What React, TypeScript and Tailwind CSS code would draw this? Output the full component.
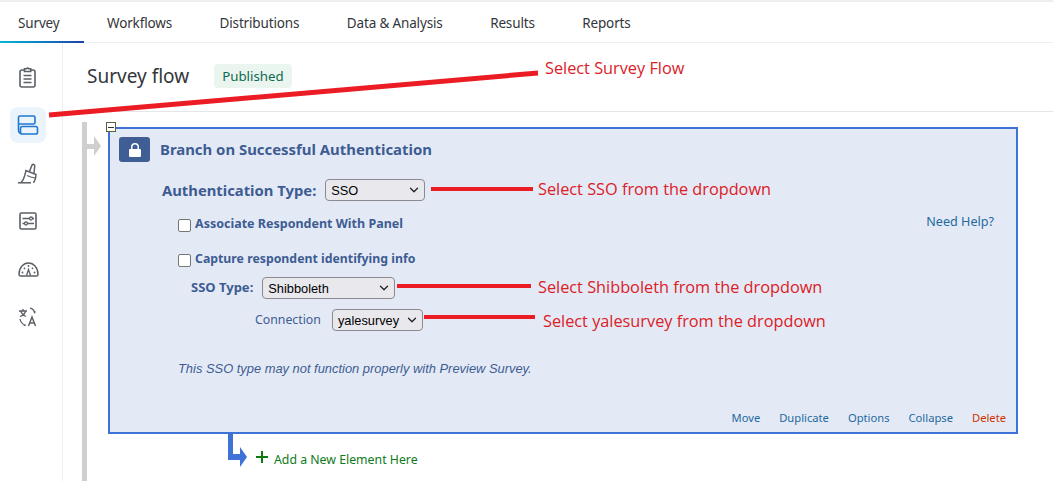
import { ChevronDown } from "lucide-react";

const TABS = ["Survey", "Workflows", "Distributions", "Data & Analysis", "Results", "Reports"];

function ClipboardIcon() {
  return (
    <svg width="20" height="22" viewBox="0 0 20 22" fill="none" strokeWidth="1.6" stroke="#5b5f66">
      <rect x="2" y="4" width="15" height="17" rx="2" />
      <path d="M6.500 4V2.800h2a1.200 1.200 0 0 1 2.200 0h2V5.500h-6.200z" fill="#fff" />
      <path d="M5.500 9.500h8M5.500 13h8M5.500 16.500h8" />
    </svg>
  );
}

function FlowIcon() {
  return (
    <svg width="22" height="22" viewBox="0 0 22 22" fill="none" stroke="#1f78d1" strokeWidth="1.600">
      <path d="M4 19.500C2.300 19 1.500 17.800 1.500 16V3.500A1.500 1.500 0 0 1 3 2H16.500A1.500 1.500 0 0 1 18 3.500V8.500A1.500 1.500 0 0 1 16.500 10H1.500" />
      <rect x="3.500" y="12.500" width="17" height="7.500" rx="1.800" />
    </svg>
  );
}

function BrushIcon() {
  return (
    <svg width="20" height="21" viewBox="0 0 20 21" fill="none" stroke="#5b5f66" strokeWidth="1.500">
      <path d="M0 19.800h13" />
      <path d="M3 19.500C6 17 7 12 8 7.500L18 11.500C18 14 17 17.500 15.500 19.800" />
      <path d="M11.500 8.500 13.800 2.500A1.500 1.500 0 0 1 16.700 3.300L16 10" />
      <path d="M9 12.500c2 1 5 2 8 2.500" strokeWidth="1.200" />
    </svg>
  );
}

function SlidersIcon() {
  return (
    <svg width="18" height="18" viewBox="0 0 18 18" fill="none" stroke="#5b5f66" strokeWidth="1.300">
      <rect x="1" y="1" width="16" height="16" rx="1.500" strokeWidth="1.600" />
      <path d="M3.500 6.500h7M13.500 6.500h1.500M3.500 11.500h2M8.500 11.500h6.500" />
      <circle cx="12" cy="6.500" r="1.500" />
      <circle cx="7" cy="11.500" r="1.500" />
    </svg>
  );
}

function GaugeIcon() {
  return (
    <svg width="21" height="15" viewBox="0 0 21 15" fill="none" stroke="#5b5f66" strokeWidth="1.500">
      <path d="M2.500 14A1.500 1.500 0 0 1 1 12.500C1 5.500 5.500 1 10.500 1S20 5.500 20 12.500A1.500 1.500 0 0 1 18.500 14z" />
      <path d="M8.500 13.500 10.500 7.500 12.500 13.500" strokeWidth="1.300" />
      <g fill="#5b5f66" stroke="none">
        <circle cx="4.500" cy="10.500" r="0.900" />
        <circle cx="6.500" cy="6.300" r="0.900" />
        <circle cx="10.500" cy="4" r="0.900" />
        <circle cx="14.500" cy="6.300" r="0.900" />
        <circle cx="16.500" cy="10.500" r="0.900" />
      </g>
    </svg>
  );
}

function TranslateIcon() {
  return (
    <svg width="20" height="20" viewBox="0 0 20 20" fill="none" stroke="#5b5f66" strokeWidth="1.300">
      <path d="M1 4h8M5 2v2M7.500 4c-.5 2.500-2.500 4.500-5.500 5.500M2.800 4.500c.8 2 2.500 4 5.200 5" />
      <path d="M12 1.200c2.500.5 4 2.200 4.500 4.300l1-1" />
      <path d="M2 12c.5 2.800 2.200 5 5 6l-1.200.6" />
      <path d="M10.500 19l3.500-9 3.500 9M11.800 16h4.500" strokeWidth="1.500" />
    </svg>
  );
}

function RailButton({ active, children }: { active?: boolean; children: React.ReactNode }) {
  return (
    <div
      className={`flex h-9 w-9 items-center justify-center rounded-lg ${
        active ? "bg-[#ebf3fb]" : ""
      }`}>
      {children}
    </div>
  );
}

function Dropdown({ value, className }: { value: string; className: string }) {
  return (
    <div
      className={`flex h-[22px] items-center justify-between rounded-[4px] border border-[#8a8a90] bg-[#e9e9ed] pl-[5px] pr-[3px] font-['Liberation_Sans',sans-serif] text-[12.800px] text-black ${className}`}>
      <span>{value}</span>
      <ChevronDown size={14} strokeWidth={2.200} className="text-[#222]" />
    </div>
  );
}

function Checkbox({ className }: { className: string }) {
  return <span className={`block h-[13px] w-[13px] shrink-0 rounded-[2px] border border-[#767676] bg-white ${className}`} />;
}

function Annotation({ className, children }: { className: string; children: React.ReactNode }) {
  return (
    <span className={`absolute font-['Open_Sans',sans-serif] text-[16.300px] leading-5 whitespace-nowrap text-[#dc2027] ${className}`}>
      {children}
    </span>
  );
}

export default function App() {
  return (
    <div className="relative h-[481px] w-[1053px] overflow-hidden bg-white font-['Noto_Sans',sans-serif]">
      {/* top tabs */}
      <div className="flex h-[43px] gap-[47.500px] border-b border-t-2 border-[#eceef0] pl-[18px] pt-[2px] text-[13.500px] tracking-[-0.15px] text-[#32363a]">
        {TABS.map((tab, i) => (
          <div key={tab} className="relative flex items-center">
            {tab}
            {i === 0 && (
              <span className="absolute -bottom-px -left-[18px] h-[2px] w-[84px] bg-gradient-to-r from-[#07b6d4] to-[#1d3fb0]" />
            )}
          </div>
        ))}
      </div>

      <div className="flex h-[438px]">
        {/* side rail */}
        <div className="flex w-[63px] shrink-0 flex-col items-start gap-[12px] border-r border-[#eceef0] pl-[10px] pt-[16px]">
          <RailButton><ClipboardIcon /></RailButton>
          <RailButton active><FlowIcon /></RailButton>
          <RailButton><BrushIcon /></RailButton>
          <RailButton><SlidersIcon /></RailButton>
          <RailButton><GaugeIcon /></RailButton>
          <RailButton><TranslateIcon /></RailButton>
        </div>

        <div className="min-w-0 flex-1">
          {/* page header */}
          <div className="flex h-[69px] items-center gap-[25px] border-b border-[#e4e6e8] pb-[2px] pl-[24px]">
            <h1 className="text-[19px] leading-7 text-[#32363a]">Survey flow</h1>
            <span className="rounded-[4px] bg-[#ebf5f0] px-[8px] py-[3px] text-[13.300px] leading-[18px] text-[#0f6b4f]">
              Published
            </span>
          </div>

          {/* flow canvas */}
          <div className="relative h-[369px] pl-[45px] pr-[35px] pt-[15px]">
            <div className="absolute bottom-0 left-[19px] top-[10px] w-[5px] bg-[#cfcfcf]" />
            <div className="absolute left-[24px] top-[32px] h-[5px] w-[7px] bg-[#cfcfcf]" />
            <div className="absolute left-[31px] top-[24px] h-0 w-0 border-y-[10px] border-l-[7px] border-y-transparent border-l-[#cfcfcf]" />

            <div className="relative h-[307px] border-2 border-[#3f72d6] bg-[#e4eaf5] text-[#3d5c93]">
              <div className="absolute -left-[4px] -top-[7px] flex h-[10px] w-[10px] items-center justify-center border border-[#55603e] bg-white">
                <span className="h-px w-[6px] bg-[#333]" />
              </div>

              <div className="flex items-center gap-[10px] pl-[9px] pt-[8px]">
                <div className="flex h-[25px] w-[31px] items-center justify-center rounded-[3px] bg-[#3f5e94]">
                  <svg width="12" height="14" viewBox="0 0 12 14" fill="#fff">
                    <path d="M1 6h1V4a4 4 0 0 1 8 0v2h1a1 1 0 0 1 1 1v6a1 1 0 0 1-1 1H1a1 1 0 0 1-1-1V7a1 1 0 0 1 1-1zm2.500 0h5V4a2.500 2.500 0 0 0-5 0z" />
                  </svg>
                </div>
                <h2 className="text-[14.900px] font-bold">Branch on Successful Authentication</h2>
              </div>

              <div className="flex items-center gap-[9px] pl-[52px] pt-[17px]">
                <span className="text-[14.800px] font-bold">Authentication Type:</span>
                <Dropdown value="SSO" className="w-[100px]" />
              </div>

              <div className="flex items-start justify-between pl-[68px] pr-[22px] pt-[14px]">
                <div className="flex items-start gap-[4px] text-[12.500px] leading-[17px] font-bold">
                  <Checkbox className="mt-[4px]" />
                  Associate Respondent With Panel
                </div>
                <a className="-mt-[2px] text-[12.600px] leading-[17px] text-[#23699e]">Need Help?</a>
              </div>

              <div className="flex items-start gap-[4px] pl-[68px] pt-[18px] text-[12.300px] leading-[17px] font-bold">
                <Checkbox className="mt-[4px]" />
                Capture respondent identifying info
              </div>

              <div className="flex items-center gap-[9px] pl-[81px] pt-[10px]">
                <span className="text-[13px] font-bold">SSO Type:</span>
                <Dropdown value="Shibboleth" className="w-[133px]" />
              </div>

              <div className="flex items-center gap-[11px] pl-[145px] pt-[10px]">
                <span className="text-[12.300px]">Connection</span>
                <Dropdown value="yalesurvey" className="w-[91px]" />
              </div>

              <p className="pl-[68px] pt-[29px] font-['Liberation_Sans',sans-serif] text-[12.900px] leading-[18px] italic">
                This SSO type may not function properly with Preview Survey.
              </p>

              <div className="absolute bottom-[6px] right-[10px] flex gap-[19px] text-[11.200px] leading-4 text-[#23699e]">
                <span>Move</span>
                <span>Duplicate</span>
                <span>Options</span>
                <span>Collapse</span>
                <span className="text-[#cc3300]">Delete</span>
              </div>
            </div>

            {/* add element */}
            <div className="absolute left-[165px] top-[322px] h-[34px] w-[19px]">
              <div className="absolute left-0 top-0 h-[26px] w-[5px] bg-[#3f72d6]" />
              <div className="absolute left-0 top-[20px] h-[6px] w-[13px] bg-[#3f72d6]" />
              <div className="absolute left-[12px] top-[13px] h-0 w-0 border-y-[10px] border-l-[7px] border-y-transparent border-l-[#3f72d6]" />
            </div>
            <div className="flex items-start gap-[5px] pl-[147px] pt-[15px]">
              <svg width="14" height="14" viewBox="0 0 14 14" className="mt-[1px]">
                <path d="M6 1h2v5h5v2H8v5H6V8H1V6h5z" fill="#0b7a12" />
              </svg>
              <span className="pt-[2px] text-[12.300px] leading-[18px] text-[#0e7a1a]">
                Add a New Element Here
              </span>
            </div>
          </div>
        </div>
      </div>

      {/* red annotations drawn on top of the screenshot */}
      <svg className="pointer-events-none absolute inset-0" width="1053" height="481" fill="none" stroke="#ec1c24" strokeWidth="4">
        <path d="M49 115 538 73" strokeWidth="5" />
        <path d="M431 189H533" />
        <path d="M397 286H531" />
        <path d="M424 317H535" />
      </svg>
      <Annotation className="left-[545px] top-[58px]">Select Survey Flow</Annotation>
      <Annotation className="left-[538px] top-[179px]">Select SSO from the dropdown</Annotation>
      <Annotation className="left-[538px] top-[277px]">Select Shibboleth from the dropdown</Annotation>
      <Annotation className="left-[543px] top-[311px]">Select yalesurvey from the dropdown</Annotation>
    </div>
  );
}
